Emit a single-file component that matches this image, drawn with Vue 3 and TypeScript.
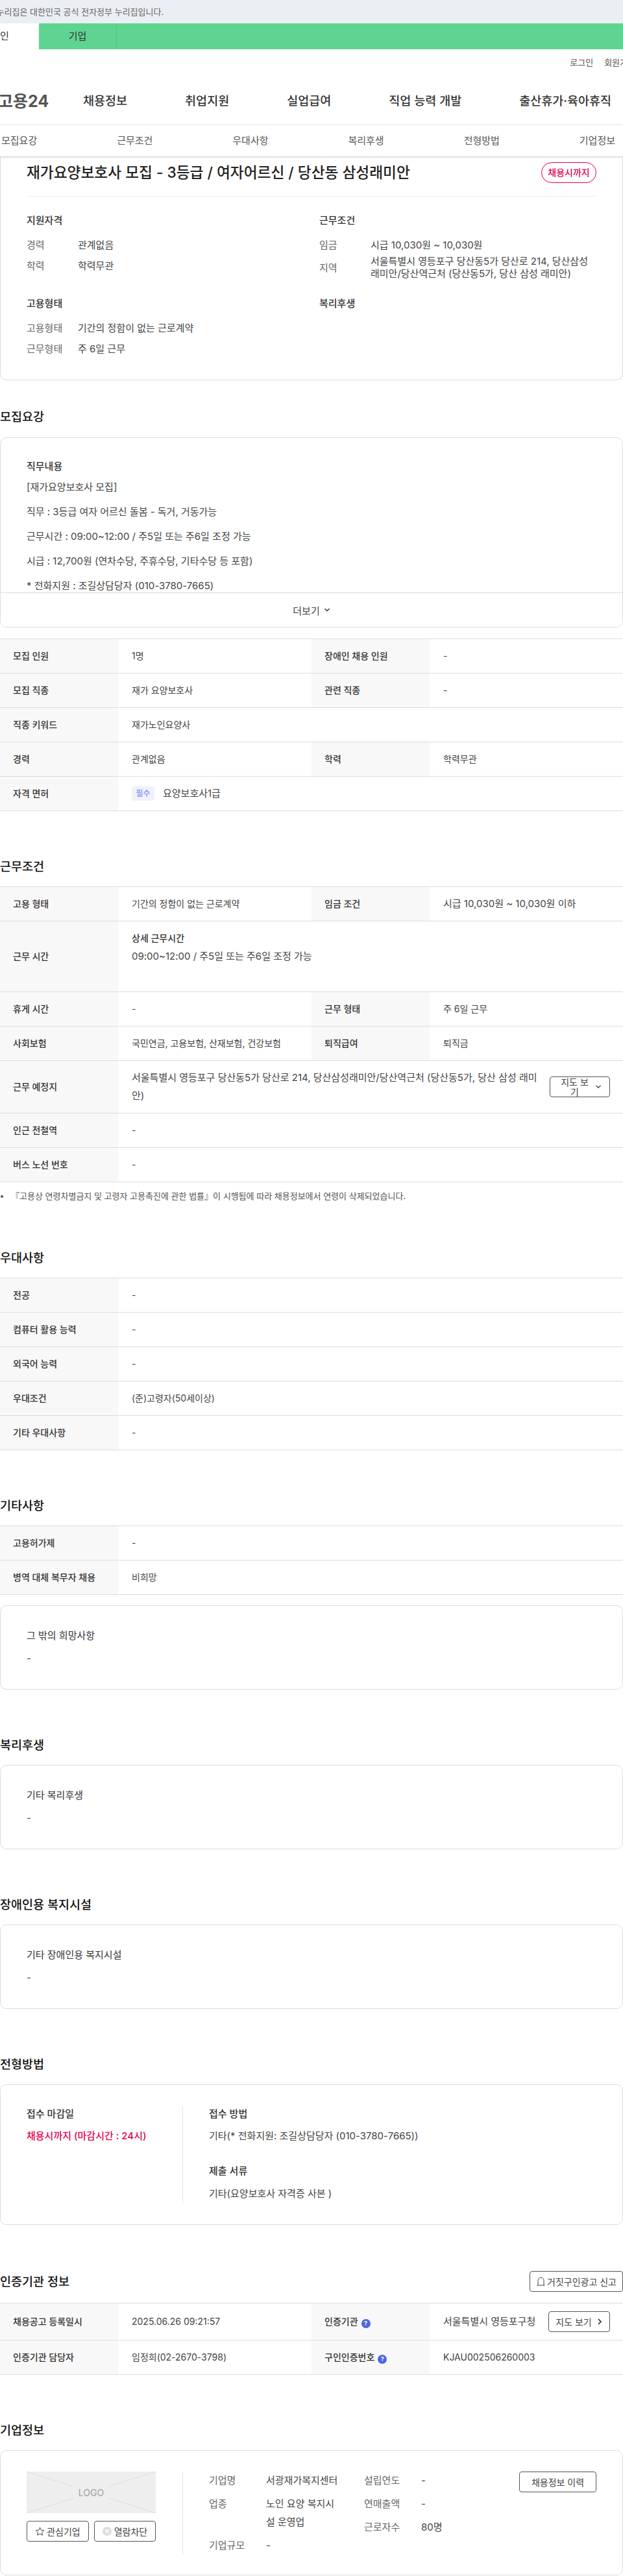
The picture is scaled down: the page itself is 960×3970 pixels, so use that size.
<template>
  <div class="page">
    <div class="gov-bar"><span>이 누리집은 대한민국 공식 전자정부 누리집입니다.</span></div>
    <div class="user-tabs">
      <a class="user-tab active">개인</a>
      <a class="user-tab">기업</a>
    </div>

    <header class="site-header">
      <div class="util-links">
        <a>로그인</a>
        <a>회원가입</a>
      </div>
      <div class="main-nav">
        <span class="logo">고용24</span>
        <nav class="nav-items">
          <a v-for="item in navItems" :key="item">{{ item }}</a>
        </nav>
      </div>
    </header>

    <div class="sub-tabs">
      <a v-for="tab in subTabs" :key="tab">{{ tab }}</a>
    </div>

    <main>
      <section class="card summary">
        <div class="summary-title">
          <h1>재가요양보호사 모집 - 3등급 / 여자어르신 / 당산동 삼성래미안</h1>
          <span class="deadline-pill">채용시까지</span>
        </div>
        <div class="summary-grid">
          <div class="summary-block">
            <h3>지원자격</h3>
            <div class="info-row"><span>경력</span><p>관계없음</p></div>
            <div class="info-row"><span>학력</span><p>학력무관</p></div>
          </div>
          <div class="summary-block">
            <h3>근무조건</h3>
            <div class="info-row"><span>임금</span><p>시급 10,030원 ~ 10,030원</p></div>
            <div class="info-row">
              <span>지역</span>
              <p>서울특별시 영등포구 당산동5가 당산로 214, 당산삼성래미안/당산역근처 (당산동5가, 당산 삼성 래미안)</p>
            </div>
          </div>
          <div class="summary-block">
            <h3>고용형태</h3>
            <div class="info-row"><span>고용형태</span><p>기간의 정함이 없는 근로계약</p></div>
            <div class="info-row"><span>근무형태</span><p>주 6일 근무</p></div>
          </div>
          <div class="summary-block">
            <h3>복리후생</h3>
          </div>
        </div>
      </section>

      <section class="block first-block">
        <h2>모집요강</h2>
        <div class="card job-desc">
          <div class="job-desc-body">
            <h3>직무내용</h3>
            <p v-for="line in jobLines" :key="line">{{ line }}</p>
          </div>
          <button class="more-btn">
            더보기
            <svg width="10" height="10" viewBox="0 0 10 10"><path d="M1.5 3l3.5 3.5L8.5 3" fill="none" stroke="#333" stroke-width="1.4" /></svg>
          </button>
        </div>

        <table class="info-table recruit-table">
          <colgroup><col class="c-th" /><col class="c-td" /><col class="c-th" /><col class="c-td" /></colgroup>
          <tbody>
            <tr><th>모집 인원</th><td>1명</td><th>장애인 채용 인원</th><td>-</td></tr>
            <tr><th>모집 직종</th><td>재가 요양보호사</td><th>관련 직종</th><td>-</td></tr>
            <tr><th>직종 키워드</th><td colspan="3">재가노인요양사</td></tr>
            <tr><th>경력</th><td>관계없음</td><th>학력</th><td>학력무관</td></tr>
            <tr>
              <th>자격 면허</th>
              <td colspan="3"><span class="license"><em>필수</em>요양보호사1급</span></td>
            </tr>
          </tbody>
        </table>
      </section>

      <section class="block">
        <h2>근무조건</h2>
        <table class="info-table">
          <colgroup><col class="c-th" /><col class="c-td" /><col class="c-th" /><col class="c-td" /></colgroup>
          <tbody>
            <tr><th>고용 형태</th><td>기간의 정함이 없는 근로계약</td><th>임금 조건</th><td class="big">시급 10,030원 ~ 10,030원 이하</td></tr>
            <tr>
              <th>근무 시간</th>
              <td colspan="3" class="hours">
                <strong>상세 근무시간</strong>
                <p>09:00~12:00 / 주5일 또는 주6일 조정 가능</p>
              </td>
            </tr>
            <tr><th>휴게 시간</th><td>-</td><th>근무 형태</th><td>주 6일 근무</td></tr>
            <tr><th>사회보험</th><td>국민연금, 고용보험, 산재보험, 건강보험</td><th>퇴직급여</th><td>퇴직금</td></tr>
            <tr>
              <th>근무 예정지</th>
              <td colspan="3">
                <div class="address">
                  <p>서울특별시 영등포구 당산동5가 당산로 214, 당산삼성래미안/당산역근처 (당산동5가, 당산 삼성 래미안)</p>
                  <button class="map-toggle">
                    <span>지도 보기</span>
                    <svg width="10" height="10" viewBox="0 0 10 10"><path d="M1.5 3l3.5 3.5L8.5 3" fill="none" stroke="#333" stroke-width="1.1" /></svg>
                  </button>
                </div>
              </td>
            </tr>
            <tr><th>인근 전철역</th><td colspan="3">-</td></tr>
            <tr><th>버스 노선 번호</th><td colspan="3">-</td></tr>
          </tbody>
        </table>
        <p class="note">『고용상 연령차별금지 및 고령자 고용촉진에 관한 법률』이 시행됨에 따라 채용정보에서 연령이 삭제되었습니다.</p>
      </section>

      <section class="block">
        <h2>우대사항</h2>
        <table class="info-table">
          <colgroup><col class="c-th" /><col class="c-rest" /></colgroup>
          <tbody>
            <tr v-for="row in preferRows" :key="row[0]"><th>{{ row[0] }}</th><td>{{ row[1] }}</td></tr>
          </tbody>
        </table>
      </section>

      <section class="block">
        <h2>기타사항</h2>
        <table class="info-table">
          <colgroup><col class="c-th" /><col class="c-rest" /></colgroup>
          <tbody>
            <tr><th>고용허가제</th><td>-</td></tr>
            <tr><th>병역 대체 복무자 채용</th><td>비희망</td></tr>
          </tbody>
        </table>
        <div class="card text-card other-card">
          <h3>그 밖의 희망사항</h3>
          <p>-</p>
        </div>
      </section>

      <section class="block">
        <h2>복리후생</h2>
        <div class="card text-card">
          <h3>기타 복리후생</h3>
          <p>-</p>
        </div>
      </section>

      <section class="block">
        <h2>장애인용 복지시설</h2>
        <div class="card text-card">
          <h3>기타 장애인용 복지시설</h3>
          <p>-</p>
        </div>
      </section>

      <section class="block">
        <h2>전형방법</h2>
        <div class="card apply-card">
          <div class="apply-left">
            <h3>접수 마감일</h3>
            <p class="red">채용시까지 (마감시간 : 24시)</p>
          </div>
          <div class="apply-right">
            <h3>접수 방법</h3>
            <p>기타(* 전화지원: 조길상담당자 (010-3780-7665))</p>
            <h3 class="docs">제출 서류</h3>
            <p>기타(요양보호사 자격증 사본 )</p>
          </div>
        </div>
      </section>

      <section class="block">
        <div class="head-row">
          <h2>인증기관 정보</h2>
          <button class="outline-btn report-btn">
            <svg width="15" height="16" viewBox="0 0 15 16"><path d="M3 14V6.5a4.5 4.5 0 0 1 9 0V14M1.5 14h12" fill="none" stroke="#444" stroke-width="1" /></svg>
            거짓구인광고 신고
          </button>
        </div>
        <table class="info-table cert-table">
          <colgroup><col class="c-th" /><col class="c-td" /><col class="c-th" /><col class="c-td" /></colgroup>
          <tbody>
            <tr class="tall">
              <th>채용공고 등록일시</th>
              <td>2025.06.26 09:21:57</td>
              <th>인증기관<i class="help">?</i></th>
              <td>
                <div class="cert-org">
                  서울특별시 영등포구청
                  <button class="outline-btn map-btn">
                    지도 보기
                    <svg width="10" height="12" viewBox="0 0 10 12"><path d="M3 2l4 4-4 4" fill="none" stroke="#222" stroke-width="1.5" /></svg>
                  </button>
                </div>
              </td>
            </tr>
            <tr>
              <th>인증기관 담당자</th>
              <td>임정희(02-2670-3798)</td>
              <th>구인인증번호<i class="help">?</i></th>
              <td>KJAU002506260003</td>
            </tr>
          </tbody>
        </table>
      </section>

      <section class="block">
        <h2>기업정보</h2>
        <div class="card company-card">
          <div class="company-left">
            <div class="logo-box">
              <svg class="logo-lines" width="199" height="64" viewBox="0 0 199 64">
                <path d="M0 0l72 23M0 64l72-23M199 0l-72 23M199 64l-72-23" stroke="#ddd" fill="none" />
              </svg>
              <span>LOGO</span>
            </div>
            <div class="company-btns">
              <button class="outline-btn fav-btn">
                <svg width="15" height="15" viewBox="0 0 15 15"><path d="M7.5 1.2l1.9 4 4.3.6-3.1 3 .8 4.3-3.9-2.1-3.9 2.1.8-4.3-3.1-3 4.3-.6z" fill="none" stroke="#444" stroke-width="1" /></svg>
                관심기업
              </button>
              <button class="outline-btn block-btn">
                <svg width="14" height="14" viewBox="0 0 14 14"><circle cx="7" cy="7" r="7" fill="#ddd" /><path d="M4.3 4.3l5.4 5.4M9.7 4.3l-5.4 5.4" stroke="#fff" stroke-width="1.3" /></svg>
                열람차단
              </button>
            </div>
          </div>
          <div class="company-info">
            <div class="company-col first">
              <div class="company-row"><span>기업명</span><p>서광재가복지센터</p></div>
              <div class="company-row"><span>업종</span><p>노인 요양 복지시설 운영업</p></div>
              <div class="company-row"><span>기업규모</span><p>-</p></div>
            </div>
            <div class="company-col">
              <div class="company-row"><span>설립연도</span><p>-</p></div>
              <div class="company-row"><span>연매출액</span><p>-</p></div>
              <div class="company-row"><span>근로자수</span><p>80명</p></div>
            </div>
            <button class="outline-btn history-btn">채용정보 이력</button>
          </div>
        </div>
      </section>
    </main>
  </div>
</template>

<script setup lang="ts">
const navItems: string[] = ['채용정보', '취업지원', '실업급여', '직업 능력 개발', '출산휴가·육아휴직']
const subTabs: string[] = ['모집요강', '근무조건', '우대사항', '복리후생', '전형방법', '기업정보']

const jobLines: string[] = [
  '[재가요양보호사 모집]',
  '직무 : 3등급 여자 어르신 돌봄 - 독거, 거동가능',
  '근무시간 : 09:00~12:00 / 주5일 또는 주6일 조정 가능',
  '시급 : 12,700원 (연차수당, 주휴수당, 기타수당 등 포함)',
  '* 전화지원 : 조길상담당자 (010-3780-7665)',
]

const preferRows: [string, string][] = [
  ['전공', '-'],
  ['컴퓨터 활용 능력', '-'],
  ['외국어 능력', '-'],
  ['우대조건', '(준)고령자(50세이상)'],
  ['기타 우대사항', '-'],
]
</script>

<style>
html,
body {
  margin: 0;
  background: #fff;
}
</style>

<style scoped>
.page {
  width: 960px;
  height: 3970px;
  overflow: hidden;
  font-family: Inter, "Noto Sans CJK KR", sans-serif;
  font-size: 15px;
  color: #444;
  background: #fff;
}

h1, h2, h3, p {
  margin: 0;
}

button {
  font-family: inherit;
  background: #fff;
  cursor: pointer;
}

/* top strips, cut off on the left like the original */
.gov-bar {
  height: 36px;
  background: #ebeef3;
  font-size: 13px;
  line-height: 36px;
  color: #666;
  white-space: nowrap;
}

.gov-bar span {
  display: block;
  margin-left: -21px;
}

.user-tabs {
  display: flex;
  height: 40px;
  margin-left: -60px;
  background: #5fd490;
}

.user-tab {
  width: 120px;
  font-size: 15px;
  line-height: 40px;
  text-align: center;
  color: #333;
  border-right: 1px solid #55c585;
  box-sizing: border-box;
}

.user-tab.active {
  background: #fff;
  border-right: 0;
}

.site-header {
  height: 116px;
  border-bottom: 1px solid #eee;
  box-sizing: content-box;
}

.util-links {
  display: flex;
  justify-content: flex-end;
  gap: 17px;
  height: 40px;
  margin-right: -19px;
  font-size: 13px;
  line-height: 40px;
  color: #555;
}

.main-nav {
  display: flex;
  align-items: center;
  height: 76px;
}

.logo {
  width: 131px;
  margin-left: -3px;
  font-size: 25px;
  font-weight: 700;
  color: #555;
  white-space: nowrap;
}

.nav-items {
  display: flex;
  gap: 89px;
  font-size: 18.5px;
  font-weight: 500;
  color: #333;
  white-space: nowrap;
}

.sub-tabs {
  position: relative;
  z-index: 2;
  display: flex;
  justify-content: space-between;
  height: 48px;
  padding: 0 12px 0 2px;
  line-height: 48px;
  color: #555;
  background: #fff;
  box-shadow: 0 1px 3px rgba(0, 0, 0, 0.22);
}

.card {
  border: 1px solid #ddd;
  border-radius: 10px;
  box-sizing: border-box;
}

.summary {
  height: 345px;
  padding: 0 40px;
  border-top: 0;
  border-radius: 0 0 10px 10px;
}

.summary-title {
  display: flex;
  justify-content: space-between;
  align-items: center;
  height: 62px;
  padding-bottom: 18px;
  box-sizing: border-box;
  padding-top: 6px;
  border-bottom: 1px solid #eee;
}

.summary-title h1 {
  font-size: 22.7px;
  font-weight: 500;
  color: #222;
  line-height: 32px;
  white-space: nowrap;
}

.deadline-pill {
  width: 85px;
  height: 32px;
  border: 1px solid #e6004d;
  border-radius: 16px;
  box-sizing: border-box;
  font-size: 14px;
  font-weight: 500;
  line-height: 30px;
  text-align: center;
  color: #e6004d;
  white-space: nowrap;
}

.summary-grid {
  display: grid;
  grid-template-columns: 451px 1fr;
  row-gap: 27px;
  padding-top: 27px;
}

.summary-block h3 {
  height: 20px;
  margin-bottom: 11px;
  font-size: 15px;
  font-weight: 500;
  line-height: 20px;
  color: #333;
}

.info-row {
  display: flex;
  align-items: center;
  min-height: 32px;
  line-height: 19px;
}

.info-row span {
  flex: 0 0 79px;
  color: #666;
}

.info-row p {
  flex: 1;
  padding-right: 4px;
  word-break: break-all;
}

.block {
  margin-top: 71px;
}

.first-block {
  margin-top: 42px;
}

h2 {
  height: 28px;
  margin-bottom: 17px;
  font-size: 18.5px;
  font-weight: 500;
  line-height: 28px;
  color: #111;
  white-space: nowrap;
}

.first-block h2 {
  margin-bottom: 18px;
}

.job-desc {
  height: 293px;
  overflow: hidden;
}

.job-desc-body {
  height: 239px;
  padding: 34px 40px 0;
  overflow: hidden;
  box-sizing: border-box;
  border-bottom: 1px solid #ddd;
}

.job-desc-body h3 {
  height: 20px;
  margin-bottom: 3px;
  font-size: 15px;
  font-weight: 500;
  line-height: 20px;
  color: #333;
}

.job-desc-body p {
  line-height: 38px;
}

.more-btn {
  display: flex;
  align-items: center;
  justify-content: center;
  gap: 6px;
  width: 100%;
  height: 52px;
  border: 0;
  font-size: 15px;
  color: #444;
}

.info-table {
  width: 960px;
  border-collapse: collapse;
  table-layout: fixed;
  border-top: 1px solid #ddd;
}

.recruit-table {
  margin-top: 17px;
}

.c-th {
  width: 182px;
}

.c-td {
  width: 298px;
}

.info-table tr {
  border-bottom: 1px solid #ddd;
}

.info-table th,
.info-table td {
  height: 53px;
  padding: 0;
  font-size: 14px;
  line-height: 20px;
  text-align: left;
  box-sizing: border-box;
}

.info-table th {
  padding-left: 20px;
  background: #f8f8f8;
  font-weight: 500;
  color: #333;
  white-space: nowrap;
}

.info-table td {
  padding-left: 21px;
  color: #444;
}

.info-table td.big {
  font-size: 15px;
}

.license {
  display: flex;
  align-items: center;
  font-size: 15px;
}

.license em {
  width: 35px;
  height: 22px;
  margin-right: 13px;
  border-radius: 4px;
  background: #eff1fd;
  font-size: 12px;
  font-style: normal;
  line-height: 22px;
  text-align: center;
  color: #6b80ee;
}

.hours {
  vertical-align: top;
}

.info-table td.hours {
  height: 109px;
  padding-top: 16px;
  font-size: 15px;
}

.hours strong {
  display: block;
  font-size: 14px;
  font-weight: 500;
  line-height: 20px;
  color: #333;
}

.hours p {
  margin-top: 8px;
}

.address {
  display: flex;
  align-items: center;
  justify-content: space-between;
  padding: 12px 20px 12px 0;
}

.address p {
  width: 636px;
  font-size: 15px;
  line-height: 28px;
  word-break: break-all;
}

.map-toggle {
  display: flex;
  align-items: center;
  flex: 0 0 93px;
  height: 32px;
  padding: 0 0 0 12px;
  border: 1px solid #555;
  border-radius: 4px;
  box-sizing: border-box;
  font-size: 14px;
  line-height: 15px;
  color: #444;
}

.map-toggle span {
  width: 51px;
  word-break: break-all;
  text-align: center;
}

.map-toggle svg {
  margin-left: 6px;
}

.note {
  position: relative;
  height: 20px;
  margin-top: 11px;
  margin-bottom: 2px;
  padding-left: 17px;
  font-size: 13px;
  line-height: 20px;
  color: #555;
  white-space: nowrap;
}

.note::before {
  content: "";
  position: absolute;
  left: 1px;
  top: 9px;
  width: 4px;
  height: 4px;
  border-radius: 50%;
  background: #555;
}

.text-card {
  height: 130px;
  padding: 36px 40px 0;
}

.text-card h3 {
  height: 20px;
  font-size: 15px;
  font-weight: 400;
  line-height: 20px;
  color: #333;
}

.text-card p {
  margin-top: 15px;
  line-height: 20px;
}

.other-card {
  margin-top: 16px;
}

.apply-card {
  display: flex;
  height: 217px;
  padding: 32px 40px;
}

.apply-left {
  width: 240px;
  padding-top: 3px;
  border-right: 1px solid #e6e6e6;
}

.apply-right {
  padding: 3px 0 0 40px;
}

.apply-card h3 {
  height: 20px;
  margin-bottom: 14px;
  font-size: 15px;
  font-weight: 500;
  line-height: 20px;
  color: #333;
}

.apply-card p {
  line-height: 20px;
}

.apply-card .docs {
  margin-top: 34px;
  margin-bottom: 15px;
}

.apply-card .red {
  font-weight: 500;
  color: #e6004d;
}

.head-row {
  display: flex;
  justify-content: space-between;
  align-items: center;
  margin-bottom: 17px;
}

.head-row h2 {
  margin-bottom: 0;
}

.outline-btn {
  display: flex;
  align-items: center;
  justify-content: center;
  height: 32px;
  padding: 0;
  border: 1px solid #555;
  border-radius: 4px;
  box-sizing: border-box;
  font-size: 14px;
  color: #444;
  white-space: nowrap;
}

.report-btn {
  width: 144px;
  gap: 2px;
}

.cert-table .tall th,
.cert-table .tall td {
  height: 57px;
}

.help {
  display: inline-block;
  width: 14px;
  height: 14px;
  margin-left: 5px;
  border-radius: 50%;
  background: #4c66e0;
  font-size: 9px;
  font-style: normal;
  font-weight: 700;
  line-height: 14px;
  text-align: center;
  vertical-align: -1px;
  color: #fff;
}

.cert-org {
  display: flex;
  align-items: center;
  justify-content: space-between;
  padding-right: 20px;
  font-size: 15px;
  white-space: nowrap;
}

.map-btn {
  width: 95px;
  gap: 7px;
}

.company-card {
  display: flex;
  height: 193px;
  padding: 32px 40px 0;
}

.company-left {
  width: 240px;
  height: 128px;
  border-right: 1px solid #e6e6e6;
}

.logo-box {
  position: relative;
  display: flex;
  align-items: center;
  justify-content: center;
  width: 199px;
  height: 64px;
  background: #eee;
  font-size: 14px;
  font-weight: 500;
  color: #aaa;
}

.logo-lines {
  position: absolute;
  left: 0;
  top: 0;
}

.logo-box span {
  position: relative;
}

.company-btns {
  display: flex;
  gap: 8px;
  width: 199px;
  margin-top: 12px;
}

.fav-btn {
  width: 96px;
  gap: 3px;
}

.block-btn {
  width: 95px;
  gap: 4px;
}

.company-info {
  position: relative;
  display: flex;
  flex: 1;
  padding-left: 40px;
}

.company-col {
  display: flex;
  flex-direction: column;
  gap: 8px;
  flex: none;
}

.company-col.first {
  width: 239px;
}

.company-row {
  display: flex;
  line-height: 28px;
}

.company-row span {
  flex: 0 0 88px;
  color: #666;
}

.company-row p {
  word-break: break-all;
}

.first .company-row p {
  width: 112px;
}

.history-btn {
  position: absolute;
  right: 0;
  top: 0;
  width: 119px;
}
</style>
